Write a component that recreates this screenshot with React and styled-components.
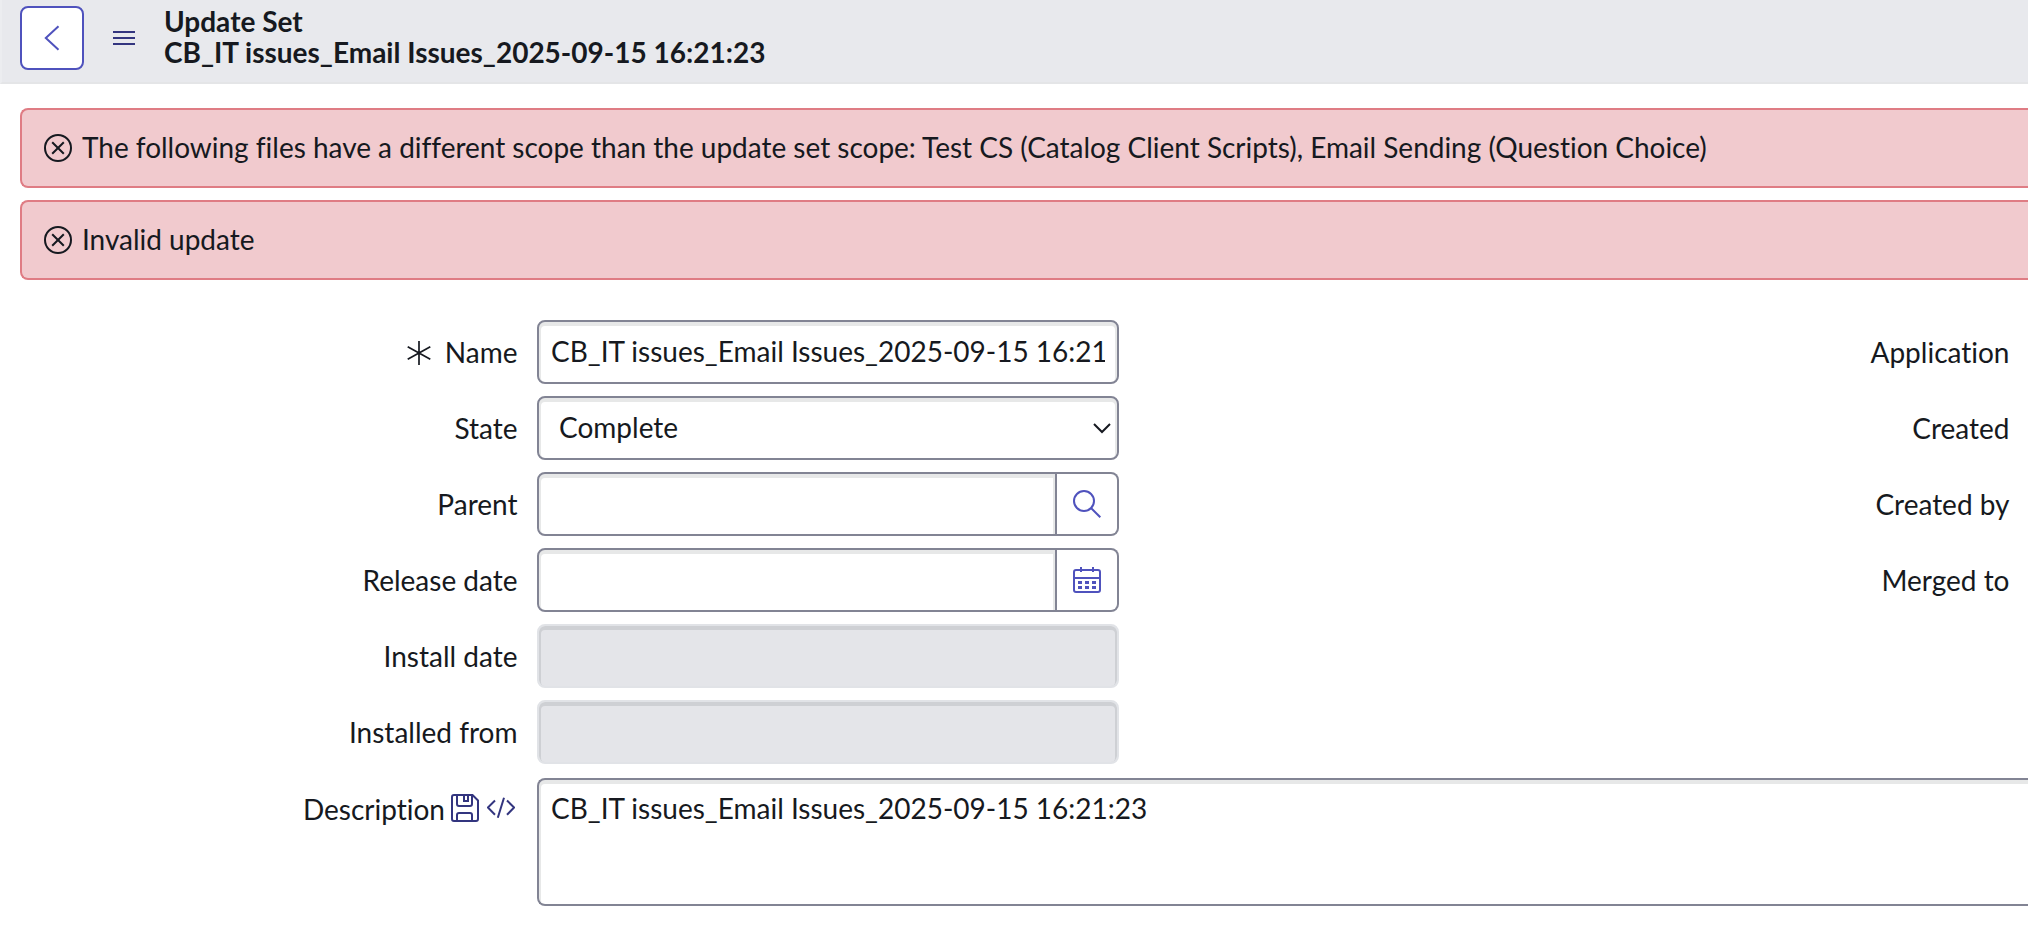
import React from "react";
import styled, { createGlobalStyle, css } from "styled-components";

const GlobalStyle = createGlobalStyle`
  * { box-sizing: border-box; }
  body {
    margin: 0;
    background: #fff;
    color: #161920;
    font: 28px/40px Lato, "Open Sans", sans-serif;
    font-variant-ligatures: none;
    overflow: hidden;
  }
`;

const Page = styled.div`
  width: 100%;
  height: 940px;
  overflow: hidden;
`;

const Header = styled.header`
  display: flex;
  align-items: flex-start;
  height: 84px;
  padding: 6px 0 0 18px;
  background: #e8e9ed;
  border-left: 2px solid #ecedf0;
  border-bottom: 2px solid #e4e5e7;
`;

const BackButton = styled.button`
  display: flex;
  align-items: center;
  justify-content: center;
  width: 64px;
  height: 64px;
  padding: 0;
  background: #fff;
  border: 2px solid #4f52bd;
  border-radius: 8px;
`;

const MenuButton = styled.button`
  display: flex;
  margin: 24px 28px 0 28px;
  padding: 0;
  background: none;
  border: 0;
`;

const Title = styled.h1`
  margin: 0;
  font-size: 28px;
  line-height: 31px;
  font-weight: 700;
`;

const TitleLine = styled.span`
  display: block;
`;

const Alerts = styled.section`
  display: flex;
  flex-direction: column;
  gap: 12px;
  padding: 24px 0 0 20px;
`;

const Alert = styled.div`
  display: flex;
  align-items: center;
  gap: 10px;
  height: 80px;
  padding-left: 22px;
  background: #f1cace;
  border: 2px solid #df7c84;
  border-right: 0;
  border-radius: 8px 0 0 8px;
`;

const AlertText = styled.span`
  padding-bottom: 2px;
  letter-spacing: -0.017px;
  white-space: nowrap;
`;

const Form = styled.form`
  display: grid;
  grid-template-columns: 1119px 890.5px;
  row-gap: 12px;
  padding-top: 40px;
`;

const Field = styled.div`
  display: grid;
  grid-template-columns: 517.5px 1fr;
  column-gap: 19.5px;
  height: 64px;
`;

const WideField = styled(Field)`
  grid-column: 1 / -1;
  width: 2034px;
  height: 128px;
  margin-top: 2px;
`;

const Label = styled.label`
  display: flex;
  align-items: center;
  justify-content: flex-end;
  height: 64px;
  white-space: pre;
`;

const WideLabel = styled(Label)`
  padding: 0 2.5px 2px 0;
`;

const LabelIcons = styled.span`
  display: flex;
  align-items: center;
  gap: 8px;
  margin: -2px 0 0 6px;
`;

const Required = styled.span`
  display: flex;
  margin: 1px 14px 0 0;
`;

const surface = css`
  width: 100%;
  height: 64px;
  color: inherit;
  font: inherit;
  font-variant-ligatures: none;
  background: #fff;
  border: 2px solid #828494;
  border-radius: 8px;
  box-shadow: inset 0 2px 0 2px #e7e8e8;
  outline: 0;
`;

const Input = styled.input`
  ${surface}
  padding: 0 12px 2px;
  ${(p) =>
    p.disabled &&
    css`
      background: #e4e5e9;
      border-color: #e1e3e7;
      box-shadow: inset 0 2px 0 2px #ced0d4;
    `}
`;

const Select = styled.div`
  ${surface}
  display: flex;
  align-items: center;
  justify-content: space-between;
  padding: 0 6px 2px 20px;

  svg {
    margin-top: 2px;
  }
`;

const TextArea = styled.textarea`
  ${surface}
  display: block;
  height: 128px;
  padding: 8px 12px;
  border-right: 0;
  border-radius: 8px 0 0 8px;
  resize: none;
`;

const InputGroup = styled.div`
  display: grid;
  grid-template-columns: 1fr 62px;
`;

const GroupInput = styled(Input)`
  border-radius: 8px 0 0 8px;
`;

const AddonButton = styled.button`
  display: flex;
  align-items: center;
  justify-content: center;
  height: 64px;
  padding: 0;
  background: #fff;
  border: 2px solid #828494;
  border-left: 0;
  border-radius: 0 8px 8px 0;
`;

const Icon = styled.svg`
  display: block;
  flex: none;
  fill: none;
  stroke: ${(p) => p.$color || "#161920"};
  stroke-width: ${(p) => p.$weight || 2};
`;

const violet = "#4f52bd";
const indigo = "#33357f";

const BackIcon = () => (
  <Icon width="16" height="26" viewBox="0 0 16 26" $color={violet}>
    <path d="M14.5 1.2 1.8 13l12.7 11.8" />
  </Icon>
);

const MenuIcon = () => (
  <Icon width="24" height="16" viewBox="0 0 24 16" $color={indigo}>
    <path d="M1 2h22M1 8h22M1 14h22" />
  </Icon>
);

const ErrorIcon = () => (
  <Icon width="28" height="28" viewBox="0 0 28 28">
    <circle cx="14" cy="14" r="13" />
    <path d="m8.2 8.2 11.6 11.6M19.8 8.2 8.2 19.8" />
  </Icon>
);

const AsteriskIcon = () => (
  <Icon width="24" height="26" viewBox="0 0 24 26" $weight={1.7}>
    <path d="M12 1v24M.7 6.7l22.6 12.6M23.3 6.7.7 19.3" />
  </Icon>
);

const ChevronIcon = () => (
  <Icon width="18" height="12" viewBox="0 0 18 12">
    <path d="m1 2 8 8 8-8" />
  </Icon>
);

const SearchIcon = () => (
  <Icon width="28" height="28" viewBox="0 0 28 28" $color={violet}>
    <circle cx="11" cy="11" r="10" />
    <path d="m18 18 9.3 9.3" />
  </Icon>
);

const CalendarIcon = () => (
  <Icon width="28" height="26" viewBox="0 0 28 26" $color={violet}>
    <rect x="1" y="3" width="26" height="22" rx="2" />
    <path d="M1 11h26M8 0v5M20 0v5" />
    <path d="M5 15.5h4M12 15.5h4M19 15.5h4M5 20.5h4M12 20.5h4M19 20.5h4" strokeWidth="3" />
  </Icon>
);

const SaveIcon = () => (
  <Icon width="28" height="28" viewBox="0 0 28 28" $color={indigo}>
    <path d="M3 1h18.5L27 6.5V25a2 2 0 0 1-2 2H3a2 2 0 0 1-2-2V3a2 2 0 0 1 2-2Z" />
    <path d="M6 1v9a2 2 0 0 0 2 2h11a2 2 0 0 0 2-2V1M13 1v6h4V1M6 27v-6a2 2 0 0 1 2-2h11a2 2 0 0 1 2 2v6" />
  </Icon>
);

const CodeIcon = () => (
  <Icon width="28" height="22" viewBox="0 0 28 22" $color={indigo}>
    <path d="M8 3.5.9 10.5 8 17.8M20 3.5l7.1 7L20 17.8M17 .8l-6.2 20" />
  </Icon>
);

const setName = "CB_IT issues_Email Issues_2025-09-15 16:21:23";

export default function App() {
  return (
    <Page>
      <GlobalStyle />
      <Header>
        <BackButton aria-label="Back"><BackIcon /></BackButton>
        <MenuButton aria-label="Menu"><MenuIcon /></MenuButton>
        <Title>
          <TitleLine>Update Set</TitleLine>
          <TitleLine>{setName}</TitleLine>
        </Title>
      </Header>
      <Alerts>
        <Alert>
          <ErrorIcon />
          <AlertText>
            The following files have a different scope than the update set scope: Test CS (Catalog Client Scripts), Email Sending (Question Choice)
          </AlertText>
        </Alert>
        <Alert>
          <ErrorIcon />
          <AlertText>Invalid update</AlertText>
        </Alert>
      </Alerts>
      <Form>
        <Field>
          <Label><Required><AsteriskIcon /></Required>Name</Label>
          <Input defaultValue={setName} />
        </Field>
        <Label>Application</Label>
        <Field>
          <Label>State</Label>
          <Select>Complete<ChevronIcon /></Select>
        </Field>
        <Label>Created</Label>
        <Field>
          <Label>Parent</Label>
          <InputGroup>
            <GroupInput />
            <AddonButton type="button" aria-label="Look up"><SearchIcon /></AddonButton>
          </InputGroup>
        </Field>
        <Label>Created by</Label>
        <Field>
          <Label>Release date</Label>
          <InputGroup>
            <GroupInput />
            <AddonButton type="button" aria-label="Pick date"><CalendarIcon /></AddonButton>
          </InputGroup>
        </Field>
        <Label>Merged to</Label>
        <Field>
          <Label>Install date</Label>
          <Input disabled />
        </Field>
        <span />
        <Field>
          <Label>Installed from</Label>
          <Input disabled />
        </Field>
        <span />
        <WideField>
          <WideLabel>Description<LabelIcons><SaveIcon /><CodeIcon /></LabelIcons></WideLabel>
          <TextArea defaultValue={setName} />
        </WideField>
      </Form>
    </Page>
  );
}
